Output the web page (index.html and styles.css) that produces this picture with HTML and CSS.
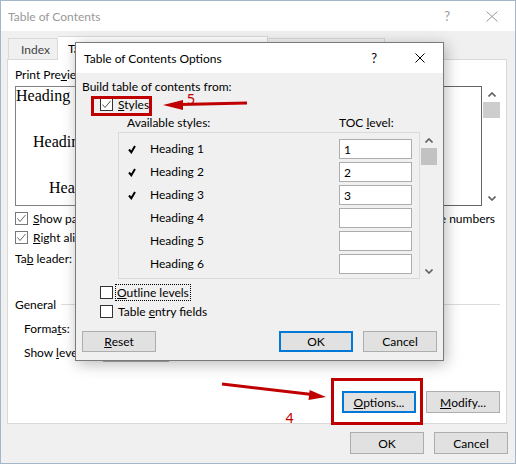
FILE: index.html
```html
<!DOCTYPE html>
<html>
<head>
<meta charset="utf-8">
<link rel="stylesheet" href="styles.css">
</head>
<body>
<div class="window">
  <div class="titlebar">
    <span class="title">Table of Contents</span>
    <span class="tb-help">?</span>
    <svg class="tb-close" width="12" height="11" viewBox="0 0 12 11"><path d="M0.5 0.5 L11.5 10.5 M11.5 0.5 L0.5 10.5" stroke="#9a9a9a" stroke-width="1" fill="none"/></svg>
  </div>
  <div class="tabs">
    <div class="tab">Index</div>
    <div class="tab active">Table of Contents</div>
    <div class="tab third"></div>
  </div>
  <div class="panel">
    <div class="cols">
      <div class="col left">
        <div class="label">Print Pre<u>v</u>iew</div>
        <div class="preview print">
          <div class="pl pl1">Heading 1</div>
          <div class="pl pl2">Heading 2</div>
          <div class="pl pl3">Heading 3</div>
        </div>
        <div class="check-row r1"><span class="cb"><svg width="11" height="11" viewBox="0 0 11 11"><path d="M1.5 5.5 L4 8.5 L9.5 2" stroke="#666" stroke-width="1" fill="none"/></svg></span><span><u>S</u>how page numbers</span></div>
        <div class="check-row r2"><span class="cb"><svg width="11" height="11" viewBox="0 0 11 11"><path d="M1.5 5.5 L4 8.5 L9.5 2" stroke="#666" stroke-width="1" fill="none"/></svg></span><span><u>R</u>ight align page numbers</span></div>
        <div class="field-row leader"><span>Ta<u>b</u> leader:</span><span class="combo"></span></div>
      </div>
      <div class="col right">
        <div class="label">We<u>b</u> Preview</div>
        <div class="preview-wrap">
          <div class="preview web"></div>
          <div class="vscroll outer">
            <div class="sbtn"><svg width="8" height="5" viewBox="0 0 8 5"><path d="M0.5 4.5 L4 1 L7.5 4.5" stroke="#606060" stroke-width="1.6" fill="none"/></svg></div>
            <div class="thumb"></div>
            <div class="sfill"></div>
            <div class="sbtn"><svg width="8" height="5" viewBox="0 0 8 5"><path d="M0.5 0.5 L4 4 L7.5 0.5" stroke="#606060" stroke-width="1.6" fill="none"/></svg></div>
          </div>
        </div>
        <div class="check-row r1 endrow"><span class="cb"><svg width="11" height="11" viewBox="0 0 11 11"><path d="M1.5 5.5 L4 8.5 L9.5 2" stroke="#666" stroke-width="1" fill="none"/></svg></span><span>Use <u>h</u>yperlinks instead of page numbers</span></div>
      </div>
    </div>
    <div class="group-title"><span>General</span><span class="gline"></span></div>
    <div class="field-row formats"><span>Forma<u>t</u>s:</span><span class="combo wide"></span></div>
    <div class="field-row levels"><span>Show <u>l</u>evels:</span><span class="spin"></span></div>
    <div class="panel-buttons">
      <div class="btn default"><u>O</u>ptions...</div>
      <div class="btn"><u>M</u>odify...</div>
    </div>
  </div>
  <div class="footer">
    <div class="btn">OK</div>
    <div class="btn">Cancel</div>
  </div>

  <div class="dialog">
    <div class="dtitle">
      <span class="dt-text">Table of Contents Options</span>
      <span class="dt-help">?</span>
      <svg class="dt-close" width="10" height="10" viewBox="0 0 10 10"><path d="M0.5 0.5 L9.5 9.5 M9.5 0.5 L0.5 9.5" stroke="#000" stroke-width="1" fill="none"/></svg>
    </div>
    <div class="dbody">
      <div class="build">Build table of contents from:</div>
      <div class="check-row styles"><span class="cb dark"><svg width="11" height="11" viewBox="0 0 11 11"><path d="M1.5 5.5 L4 8.5 L9.5 2" stroke="#555" stroke-width="1" fill="none"/></svg></span><span><u>S</u>tyles</span></div>
      <div class="hdr"><span class="h-avail">Available styles:</span><span>TOC <u>l</u>evel:</span></div>
      <div class="listwrap">
        <div class="list">
          <div class="lrow"><span class="mark"><svg width="8" height="9" viewBox="0 0 8 9"><path d="M1 4.5 L3.3 7.3 L7 1" stroke="#000" stroke-width="2" fill="none"/></svg></span><span class="name">Heading 1</span><span class="lvl">1</span></div>
          <div class="lrow"><span class="mark"><svg width="8" height="9" viewBox="0 0 8 9"><path d="M1 4.5 L3.3 7.3 L7 1" stroke="#000" stroke-width="2" fill="none"/></svg></span><span class="name">Heading 2</span><span class="lvl">2</span></div>
          <div class="lrow"><span class="mark"><svg width="8" height="9" viewBox="0 0 8 9"><path d="M1 4.5 L3.3 7.3 L7 1" stroke="#000" stroke-width="2" fill="none"/></svg></span><span class="name">Heading 3</span><span class="lvl">3</span></div>
          <div class="lrow"><span class="mark"></span><span class="name">Heading 4</span><span class="lvl"></span></div>
          <div class="lrow"><span class="mark"></span><span class="name">Heading 5</span><span class="lvl"></span></div>
          <div class="lrow"><span class="mark"></span><span class="name">Heading 6</span><span class="lvl"></span></div>
        </div>
        <div class="vscroll inner">
          <div class="sbtn"><svg width="8" height="5" viewBox="0 0 8 5"><path d="M0.5 4.5 L4 1 L7.5 4.5" stroke="#606060" stroke-width="1.6" fill="none"/></svg></div>
          <div class="thumb"></div>
          <div class="sfill"></div>
          <div class="sbtn"><svg width="8" height="5" viewBox="0 0 8 5"><path d="M0.5 0.5 L4 4 L7.5 0.5" stroke="#606060" stroke-width="1.6" fill="none"/></svg></div>
        </div>
      </div>
      <div class="check-row outline"><span class="cb dark"></span><span class="focus"><u>O</u>utline levels</span></div>
      <div class="check-row entry"><span class="cb dark"></span><span>Table <u>e</u>ntry fields</span></div>
      <div class="dbuttons">
        <div class="btn"><u>R</u>eset</div>
        <div class="dright">
          <div class="btn default">OK</div>
          <div class="btn">Cancel</div>
        </div>
      </div>
    </div>
  </div>

  <svg class="annot" width="516" height="464" viewBox="0 0 516 464">
    <rect x="92.5" y="97.5" width="58" height="17" fill="none" stroke="#c00000" stroke-width="3"/>
    <line x1="247" y1="103" x2="180" y2="104.5" stroke="#c00000" stroke-width="3"/>
    <polygon points="163,105 183,100 183,110" fill="#c00000"/>
    <text x="187" y="104" class="anum">5</text>
    <rect x="332.5" y="379.5" width="89" height="44" fill="none" stroke="#c00000" stroke-width="3"/>
    <line x1="222" y1="384" x2="312" y2="394.5" stroke="#c00000" stroke-width="3"/>
    <polygon points="326,397 309.7,389.9 308.5,399.9" fill="#c00000"/>
    <text x="285.5" y="423" class="anum">4</text>
  </svg>
</div>
</body>
</html>
```

FILE: styles.css
```css
* { box-sizing: border-box; }
html, body { margin: 0; padding: 0; }
body {
  width: 516px;
  height: 464px;
  overflow: hidden;
  font-family: Lato, "Noto Sans", sans-serif;
  font-size: 12px;
  color: #000;
}
u { text-decoration: underline; text-underline-offset: 1px; }

.window {
  position: relative;
  width: 516px;
  height: 464px;
  border: 1px solid #a3b7cb;
  background: #f0f0f0;
}

/* title bar */
.titlebar {
  height: 30px;
  background: #fff;
  display: flex;
  align-items: center;
  padding-left: 7px;
  color: #999;
}
.title { font-size: 12px; flex: 1; }
.tb-help { font-size: 13px; margin-right: 36px; }
.tb-close { margin-right: 17px; }

/* tabs */
.tabs {
  height: 28px;
  display: flex;
  align-items: flex-end;
  padding-left: 7px;
}
.tab {
  height: 21px;
  border: 1px solid #d9d9d9;
  border-bottom: none;
  background: #f0f0f0;
  color: #444;
  padding: 0 12px;
  display: flex;
  align-items: center;
  width: 50px;
}
.tab.active {
  height: 24px;
  margin-bottom: -1px;
  background: #fff;
  width: 210px;
  border-left: none;
  position: relative;
  z-index: 1;
  color: #000;
  padding-left: 10px;
}
.tab.third { width: 117px; border-left: none; }

/* main panel */
.panel {
  margin-left: 6px;
  width: 500px;
  height: 365px;
  background: #fff;
  border: 1px solid #d9d9d9;
  padding: 7px 6px 0 7px;
}
.cols { display: flex; gap: 25px; align-items: flex-start; }
.col.left { width: 230px; }
.col.right { flex: 1; }
.label { height: 16px; line-height: 16px; }
.preview {
  margin-top: 3px;
  height: 120px;
  border: 1px solid #828282;
  background: #fff;
  font-family: "Liberation Serif", serif;
  font-size: 16px;
  overflow: hidden;
}
.pl { height: 18px; line-height: 18px; white-space: nowrap; }
.pl1 { margin-left: 0; }
.pl2 { margin-left: 17px; margin-top: 28px; }
.pl3 { margin-left: 33px; margin-top: 28px; }
.preview-wrap { display: flex; margin-top: 3px; height: 120px; }
.preview.web { flex: 1; margin-top: 0; border-color: #646464; }

.vscroll { display: flex; flex-direction: column; align-items: center; }
.vscroll.outer { width: 17px; margin-left: 1px; }
.vscroll .sbtn { height: 16px; display: flex; align-items: center; justify-content: center; width: 100%; }
.vscroll .thumb { width: 100%; height: 16px; background: #cdcdcd; }
.vscroll .sfill { flex: 1; }
.vscroll.inner { width: 18px; margin-left: 1px; }
.vscroll.inner .thumb { width: 16px; height: 17px; background: #c2c2c2; }

.check-row { display: flex; align-items: center; height: 16px; gap: 5px; white-space: nowrap; }
.cb {
  width: 13px; height: 13px;
  border: 1px solid #777;
  background: #fff;
  display: flex; align-items: center; justify-content: center;
  flex: none;
}
.cb.dark { border-color: #333; }
.check-row.r1 { margin-top: 4px; }
.check-row.r2 { margin-top: 3px; }
.check-row.endrow { justify-content: flex-end; margin-right: 5px; }
.field-row { display: flex; align-items: center; white-space: nowrap; }
.field-row.leader { height: 22px; margin-top: 2px; gap: 12px; }
.combo {
  height: 21px; width: 110px;
  border: 1px solid #adadad; background: #e5e5e5;
}

.group-title { display: flex; align-items: center; height: 16px; margin-top: 27px; }
.gline { flex: 1; border-top: 1px solid #dcdcdc; margin-left: 5px; }
.field-row.formats { height: 16px; margin-top: 8px; padding-left: 9px; gap: 30px; }
.combo.wide { width: 150px; }
.field-row.levels { height: 20px; margin-top: 6px; padding-left: 9px; gap: 14px; }
.spin { width: 66px; height: 20px; border: 1px solid #adadad; background: #fff; }
.panel-buttons { display: flex; justify-content: flex-end; gap: 10px; margin-top: 29px; }

.btn {
  width: 74px; height: 22px;
  background: #e1e1e1;
  border: 1px solid #adadad;
  display: flex; align-items: center; justify-content: center;
  white-space: nowrap;
}
.btn.default { border: 2px solid #0078d7; }

.footer { display: flex; justify-content: flex-end; gap: 10px; padding-right: 7px; margin-top: 8px; }

/* overlay dialog */
.dialog {
  position: absolute;
  left: 74px;
  top: 41px;
  width: 369px;
  height: 319px;
  border: 1px solid #7a7a7a;
  background: #f0f0f0;
  box-shadow: 2px 3px 14px rgba(0,0,0,0.28);
  z-index: 5;
}
.dtitle {
  height: 30px; background: #fff;
  display: flex; align-items: center;
  padding-left: 8px;
}
.dt-text { flex: 1; font-size: 12px; }
.dt-help { font-size: 13px; margin-right: 38px; }
.dt-close { margin-right: 18px; }
.dbody { padding: 6px 6px 0 6px; }
.build { height: 16px; line-height: 16px; }
.check-row.styles { margin-left: 18px; margin-top: 1px; }
.hdr { display: flex; height: 16px; align-items: center; margin-left: 45px; margin-top: 2px; }
.h-avail { width: 212px; }
.listwrap { display: flex; margin-left: 36px; margin-top: 2px; height: 147px; }
.list {
  width: 302px;
  border: 1px solid #dadada;
  padding: 6px 7px 0 9px;
  display: flex; flex-direction: column; gap: 3px;
}
.lrow { height: 20px; display: flex; align-items: center; }
.mark { width: 22px; display: flex; align-items: center; }
.name { width: 189px; margin-top: -1px; }
.lvl {
  width: 73px; height: 20px; border: 1px solid #adadad; background: #fff;
  padding-left: 4px; display: flex; align-items: center;
}
.check-row.outline { margin-left: 18px; margin-top: 5px; }
.focus { outline: 1px dotted #000; outline-offset: 0; padding: 0 1px; margin-left: -2px; line-height: 15px; }
.check-row.entry { margin-left: 18px; margin-top: 3px; }
.dbuttons { display: flex; justify-content: space-between; margin-top: 12px; padding-right: 0; }
.dbuttons .btn { height: 21px; }
.dright { display: flex; gap: 10px; }

/* annotations */
.annot { position: absolute; left: -1px; top: -1px; z-index: 10; pointer-events: none; }
.anum { font-family: "Noto Sans", sans-serif; font-size: 14px; fill: #c00000; }
```
